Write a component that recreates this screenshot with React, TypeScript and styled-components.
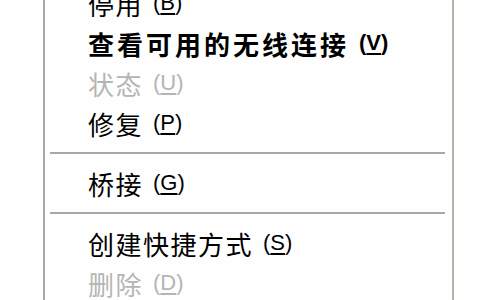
import styled, { createGlobalStyle } from 'styled-components'

const GlobalStyle = createGlobalStyle`
    html, body {
        margin: 0;
        padding: 0;
        background: #ffffff;
    }
`

type Entry =
    | { kind: 'item'; label: string; key: string; bold?: boolean; disabled?: boolean }
    | { kind: 'separator' }

const entries: Entry[] = [
    { kind: 'item', label: '停用', key: 'B' },
    { kind: 'item', label: '查看可用的无线连接', key: 'V', bold: true },
    { kind: 'item', label: '状态', key: 'U', disabled: true },
    { kind: 'item', label: '修复', key: 'P' },
    { kind: 'separator' },
    { kind: 'item', label: '桥接', key: 'G' },
    { kind: 'separator' },
    { kind: 'item', label: '创建快捷方式', key: 'S' },
    { kind: 'item', label: '删除', key: 'D', disabled: true },
]

export default function App() {
    return (
        <>
            <GlobalStyle />
            <StyledViewport>
                <StyledMenu>
                    {entries.map((entry, i) =>
                        entry.kind === 'separator' ? (
                            <StyledSeparator key={i} />
                        ) : (
                            <StyledItem
                                key={i}
                                $bold={entry.bold}
                                $disabled={entry.disabled}
                            >
                                <span className="item__label">{entry.label}</span>
                                <span className="item__key">
                                    (<u>{entry.key}</u>)
                                </span>
                            </StyledItem>
                        )
                    )}
                </StyledMenu>
            </StyledViewport>
        </>
    )
}

const StyledViewport = styled.div`
    width: 480px;
    height: 300px;
    overflow: hidden;
    background: #ffffff;
`

const StyledMenu = styled.ul`
    list-style: none;
    margin: -17px 0 0 43px;
    padding: 0;
    width: 407px;
    border-left: 2px solid #a9a9a9;
    border-right: 2px solid #b7b3a8;
    background: #fefefe;
`

const StyledItem = styled.li<{ $bold?: boolean; $disabled?: boolean }>`
    display: flex;
    align-items: center;
    gap: 10px;
    height: 40px;
    padding-left: 43px;
    font-family: 'Noto Sans CJK SC', sans-serif;
    font-size: 26px;
    font-weight: ${({ $bold }) => ($bold ? 700 : 400)};
    letter-spacing: ${({ $bold }) => ($bold ? '3px' : '1.5px')};
    color: ${({ $disabled }) => ($disabled ? '#b5b5b5' : '#000000')};
    white-space: nowrap;

    .item__key {
        font-family: 'Liberation Sans', sans-serif;
        font-size: 22px;
        letter-spacing: 0;
    }

    u {
        text-underline-offset: 3px;
    }
`

const StyledSeparator = styled.li`
    height: 20px;
    display: flex;
    align-items: center;
    padding: 0 7px 0 5px;

    &::after {
        content: '';
        flex: 1;
        height: 2px;
        background: #a8a8a8;
    }
`
